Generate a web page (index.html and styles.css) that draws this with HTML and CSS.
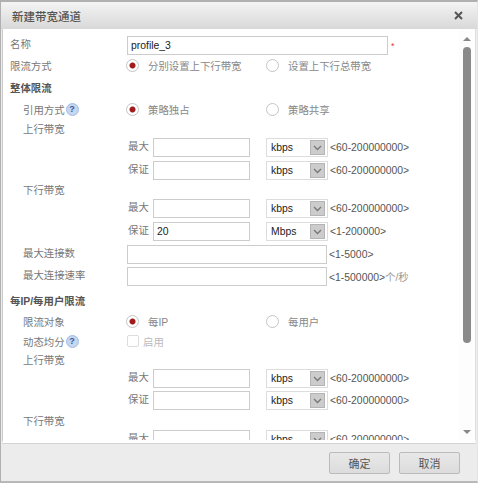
FILE: index.html
```html
<!DOCTYPE html>
<html lang="zh-CN">
<head>
  <meta charset="UTF-8">
  <title>新建带宽通道</title>
  <link rel="stylesheet" href="styles.css">
</head>
<body>
  <div class="dialog">
    <div class="dialog-header">
      <span class="dialog-title">新建带宽通道</span>
      <svg class="close-icon" width="9" height="9" viewBox="0 0 9 9"><path d="M1 1L8 8M8 1L1 8" stroke="#555" stroke-width="2"/></svg>
    </div>

    <div class="dialog-body">
      <div class="form">
        <div class="row row-name">
          <label class="label label-high">名称</label>
          <input class="input input-name" type="text" value="profile_3">
          <span class="required">*</span>
        </div>
        <div class="row row-radio">
          <label class="label">限流方式</label>
          <span class="radio checked"></span><span class="radio-text">分别设置上下行带宽</span>
          <span class="radio"></span><span class="radio-text">设置上下行总带宽</span>
        </div>
        <div class="row section"><span class="section-title">整体限流</span></div>
        <div class="row row-quote">
          <label class="label sub">引用方式<span class="help">?</span></label>
          <span class="radio checked"></span><span class="radio-text">策略独占</span>
          <span class="radio"></span><span class="radio-text">策略共享</span>
        </div>
        <div class="row row-title"><label class="label sub">上行带宽</label></div>
        <div class="row row-rate">
          <label class="rate-label">最大</label>
          <input class="input input-rate" type="text">
          <div class="select"><span>kbps</span><i class="select-btn"><svg width="9" height="6" viewBox="0 0 9 6"><path d="M1 1L4.500 4.500L8 1" fill="none" stroke="#777" stroke-width="1.300"/></svg></i></div>
          <span class="range">&lt;60-200000000&gt;</span>
        </div>
        <div class="row row-rate">
          <label class="rate-label">保证</label>
          <input class="input input-rate" type="text">
          <div class="select"><span>kbps</span><i class="select-btn"><svg width="9" height="6" viewBox="0 0 9 6"><path d="M1 1L4.500 4.500L8 1" fill="none" stroke="#777" stroke-width="1.300"/></svg></i></div>
          <span class="range">&lt;60-200000000&gt;</span>
        </div>
        <div class="row row-title"><label class="label sub">下行带宽</label></div>
        <div class="row row-rate">
          <label class="rate-label">最大</label>
          <input class="input input-rate" type="text">
          <div class="select"><span>kbps</span><i class="select-btn"><svg width="9" height="6" viewBox="0 0 9 6"><path d="M1 1L4.500 4.500L8 1" fill="none" stroke="#777" stroke-width="1.300"/></svg></i></div>
          <span class="range">&lt;60-200000000&gt;</span>
        </div>
        <div class="row row-rate">
          <label class="rate-label">保证</label>
          <input class="input input-rate" type="text" value="20">
          <div class="select"><span>Mbps</span><i class="select-btn"><svg width="9" height="6" viewBox="0 0 9 6"><path d="M1 1L4.500 4.500L8 1" fill="none" stroke="#777" stroke-width="1.300"/></svg></i></div>
          <span class="range">&lt;1-200000&gt;</span>
        </div>
        <div class="row row-conn">
          <label class="label sub label-high">最大连接数</label>
          <input class="input input-conn" type="text">
          <span class="range">&lt;1-5000&gt;</span>
        </div>
        <div class="row row-conn">
          <label class="label sub label-high">最大连接速率</label>
          <input class="input input-conn" type="text">
          <span class="range">&lt;1-500000&gt;<em class="unit">个/秒</em></span>
        </div>
        <div class="row section section-ip"><span class="section-title">每IP/每用户限流</span></div>
        <div class="row row-target">
          <label class="label sub">限流对象</label>
          <span class="radio checked"></span><span class="radio-text">每IP</span>
          <span class="radio"></span><span class="radio-text">每用户</span>
        </div>
        <div class="row row-dynamic">
          <label class="label sub">动态均分<span class="help">?</span></label>
          <span class="checkbox"></span><span class="check-text">启用</span>
        </div>
        <div class="row row-title"><label class="label sub">上行带宽</label></div>
        <div class="row row-rate">
          <label class="rate-label">最大</label>
          <input class="input input-rate" type="text">
          <div class="select"><span>kbps</span><i class="select-btn"><svg width="9" height="6" viewBox="0 0 9 6"><path d="M1 1L4.500 4.500L8 1" fill="none" stroke="#777" stroke-width="1.300"/></svg></i></div>
          <span class="range">&lt;60-200000000&gt;</span>
        </div>
        <div class="row row-rate row-tight">
          <label class="rate-label">保证</label>
          <input class="input input-rate" type="text">
          <div class="select"><span>kbps</span><i class="select-btn"><svg width="9" height="6" viewBox="0 0 9 6"><path d="M1 1L4.500 4.500L8 1" fill="none" stroke="#777" stroke-width="1.300"/></svg></i></div>
          <span class="range">&lt;60-200000000&gt;</span>
        </div>
        <div class="row row-title"><label class="label sub">下行带宽</label></div>
        <div class="row row-rate">
          <label class="rate-label">最大</label>
          <input class="input input-rate" type="text">
          <div class="select"><span>kbps</span><i class="select-btn"><svg width="9" height="6" viewBox="0 0 9 6"><path d="M1 1L4.500 4.500L8 1" fill="none" stroke="#777" stroke-width="1.300"/></svg></i></div>
          <span class="range">&lt;60-200000000&gt;</span>
        </div>
      </div>

      <div class="scrollbar">
        <span class="arrow-up"></span>
        <span class="thumb"></span>
        <span class="arrow-down"></span>
      </div>
    </div>

    <div class="dialog-footer">
      <button class="btn">确定</button>
      <button class="btn">取消</button>
    </div>
  </div>
</body>
</html>
```

FILE: styles.css
```css
* {
  box-sizing: border-box;
  margin: 0;
  padding: 0;
}

html, body {
  width: 478px;
  height: 483px;
  overflow: hidden;
}

body {
  font-family: "Liberation Sans", "Noto Sans CJK SC", sans-serif;
  font-size: 10.4px;
  color: #333;
  background-color: #fff;
}

.dialog {
  width: 478px;
  height: 483px;
  display: flex;
  flex-direction: column;
  border-top: 2px solid #b0b0b0;
  border-left: 1px solid #b0b0b0;
  border-right: 1px solid #e4e4e4;
  border-bottom: 2px solid #b8b8b8;
  background-color: #ececec;
}

.dialog-header {
  height: 27px;
  flex: none;
  display: flex;
  justify-content: space-between;
  align-items: center;
  padding: 0 14px 0 11px;
  background: linear-gradient(#f4f4f4, #d8d8d8);
}

.dialog-title {
  font-size: 11.5px;
  font-weight: 500;
  color: #555;
}

.dialog-body {
  height: 414px;
  flex: none;
  display: flex;
  margin: 0 1px;
  background-color: #fff;
  border-left: 1px solid #ccc;
  border-right: 1px solid #e0e0e0;
  border-bottom: 3px solid #fff;
  box-shadow: 0 1px 0 #d4d4d4;
}

.form {
  width: 456px;
  height: 411px;
  flex: none;
  padding-top: 7px;
  overflow: hidden;
}

.row {
  display: flex;
  align-items: center;
  padding-left: 7px;
}

.label {
  width: 117px;
  flex: none;
  display: flex;
  align-items: center;
  color: #777;
}

.label.sub {
  padding-left: 13px;
}

.label-high {
  margin-bottom: 5px;
}

.row-name {
  height: 19px;
  margin-bottom: 1px;
}

.row-radio {
  height: 19px;
}

.section {
  height: 25px;
}

.section-title {
  font-weight: 700;
  color: #555;
}

.row-quote {
  height: 18px;
  margin-bottom: 1px;
}

.row-title {
  height: 19px;
}

.row-rate {
  height: 19px;
}

.row-rate + .row-rate {
  margin-top: 4px;
}

.row-rate + .row-tight {
  margin-top: 3px;
}

.row-tight {
  margin-bottom: 1px;
}

.row-conn {
  height: 19px;
  margin-top: 4px;
}

.row-conn + .row-conn {
  margin-top: 3px;
}

.section-ip {
  height: 22px;
  margin-top: 3px;
}

.row-target {
  height: 18px;
  margin-top: 1px;
}

.row-dynamic {
  height: 18px;
  margin-top: 2px;
}

.input {
  height: 19px;
  border: 1px solid #ccc;
  padding: 0 3px;
  font: 10.4px "Liberation Sans", sans-serif;
  color: #222;
  background-color: #fff;
  outline: none;
}

.input-name {
  width: 261px;
}

.input-rate {
  width: 97px;
}

.input-conn {
  width: 200px;
}

.required {
  margin-left: 3px;
  color: #e33;
  font-size: 9px;
}

.radio {
  width: 13px;
  height: 13px;
  flex: none;
  margin-left: -1px;
  margin-right: 9px;
  border: 1px solid #c4c4c4;
  border-radius: 50%;
  background-color: #fff;
}

.radio.checked {
  background: radial-gradient(circle, #a01c1c 0 2.500px, #fff 3.500px);
}

.radio-text {
  width: 119px;
  flex: none;
  color: #888;
}

.help {
  width: 13px;
  height: 13px;
  flex: none;
  margin-left: 1px;
  border: 1px solid #a3bbe6;
  border-radius: 50%;
  background-color: #c6d6f0;
  color: #3a5a9a;
  font-size: 9px;
  font-weight: 700;
  line-height: 11px;
  text-align: center;
}

.checkbox {
  width: 12px;
  height: 12px;
  margin-right: 4px;
  border: 1px solid #ddd;
  border-radius: 2px;
}

.check-text {
  color: #bbb;
}

.rate-label {
  width: 25px;
  flex: none;
  margin-left: 118px;
  margin-bottom: 5px;
  color: #777;
}

.select {
  width: 62px;
  height: 19px;
  flex: none;
  display: flex;
  align-items: center;
  justify-content: space-between;
  margin-left: 16px;
  padding: 0 2px 0 4px;
  border: 1px solid #ddd;
  color: #222;
}

.select-btn {
  width: 15px;
  height: 15px;
  display: flex;
  align-items: center;
  justify-content: center;
  background-color: #ccc;
  border: 1px solid #b4b4b4;
}

.range {
  margin-left: 2px;
  color: #555;
}

.unit {
  font-style: normal;
  color: #999;
}

.scrollbar {
  width: 16px;
  flex: none;
  display: flex;
  flex-direction: column;
  align-items: center;
  padding: 8px 0 6px;
  background-color: #fdfdfd;
}

.thumb {
  width: 8px;
  height: 296px;
  margin-top: 6px;
  border-radius: 4px;
  background-color: #8a8a8a;
}

.arrow-up, .arrow-down {
  width: 0;
  height: 0;
  border-left: 4px solid transparent;
  border-right: 4px solid transparent;
}

.arrow-up {
  border-bottom: 4px solid #888;
}

.arrow-down {
  margin-top: auto;
  border-top: 4px solid #888;
}

.dialog-footer {
  flex: 1;
  display: flex;
  justify-content: flex-end;
  align-items: flex-start;
  gap: 9px;
  padding: 9px 17px 0 0;
}

.btn {
  width: 61px;
  height: 22px;
  border: 1px solid #bbb;
  border-radius: 2px;
  background: linear-gradient(#e8e8e8, #dcdcdc);
  color: #555;
  font: 11px "Noto Sans CJK SC", sans-serif;
}
```
